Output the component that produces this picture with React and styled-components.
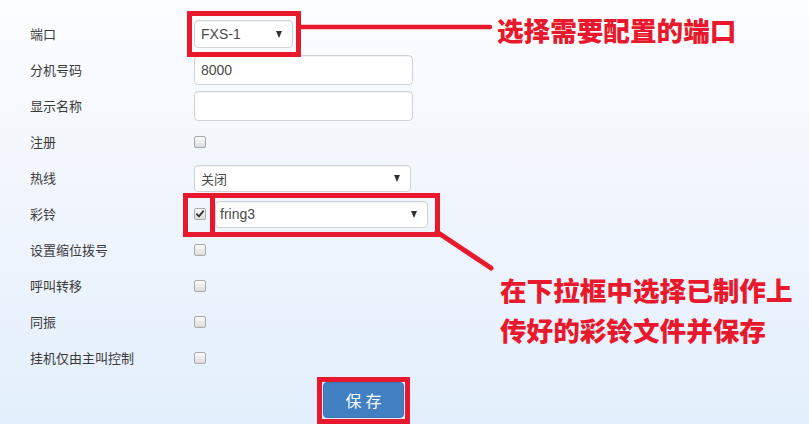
import React from "react";
import styled, { createGlobalStyle } from "styled-components";

const Global = createGlobalStyle`
  html, body { margin: 0; padding: 0; height: 100%; }
  body {
    background: linear-gradient(180deg, #fcfdff 0%, #f1f6fd 45%, #e3effc 100%);
    font-family: "Noto Sans CJK SC", "Noto Sans", sans-serif;
    overflow: hidden;
  }
  #root { min-height: 424px; }
`;

const Page = styled.div`
  position: relative;
  width: 809px;
  height: 424px;
  padding: 16px 0 0 30px;
  box-sizing: border-box;
`;

const Form = styled.div`
  display: flex;
  flex-direction: column;
`;

const Row = styled.div`
  display: grid;
  grid-template-columns: 164px 1fr;
  align-items: center;
  height: 36px;
`;

const Label = styled.div`
  font-size: 13px;
  color: #3a3a3a;
  line-height: 16px;
`;

const Controls = styled.div`
  display: flex;
  align-items: center;
  gap: ${(p) => p.$gap || 0}px;
`;

const Field = styled.div`
  position: relative;
  box-sizing: border-box;
  width: ${(p) => p.$w}px;
  height: ${(p) => p.$h}px;
  background: #fff;
  border: 1px solid #cfd3d8;
  border-radius: 4px;
  box-shadow: inset 0 1px 1px rgba(0, 0, 0, 0.06);
  display: flex;
  align-items: center;
  padding-left: ${(p) => p.$pl || 6}px;
  font-family: "Liberation Sans", "Noto Sans CJK SC", sans-serif;
  font-size: 14px;
  color: #555;
  ${(p) =>
    p.$select &&
    `
    &::after {
      content: "";
      position: absolute;
      right: 10px;
      top: 50%;
      margin-top: -3px;
      border-left: 3.5px solid transparent;
      border-right: 3.5px solid transparent;
      border-top: 7px solid #333;
    }
  `}
`;

const FieldText = styled.span`
  font-family: ${(p) => (p.$cjk ? '"Noto Sans CJK SC", sans-serif' : '"Liberation Sans", "Noto Sans CJK SC", sans-serif')};
  font-size: ${(p) => (p.$cjk ? 13 : 14)}px;
  color: #4a4a4a;
`;

const Check = styled.span`
  box-sizing: border-box;
  width: 12px;
  height: 12px;
  border: 1px solid #a9acb0;
  border-radius: 2px;
  background: linear-gradient(180deg, #fafafa 0%, #dcdcdc 100%);
  display: flex;
  align-items: center;
  justify-content: center;
`;

const ButtonRow = styled.div`
  display: flex;
  padding-left: 293px;
  margin-top: 6px;
`;

const SaveButton = styled.button`
  width: 81px;
  height: 36px;
  border: 1px solid #3a74b4;
  border-radius: 4px;
  background: #4380c3;
  color: #fff;
  font-family: "Noto Sans CJK SC", sans-serif;
  font-size: 16px;
  letter-spacing: 4px;
  padding: 0 0 0 4px;
`;

const RedBox = styled.div`
  position: absolute;
  left: ${(p) => p.$x}px;
  top: ${(p) => p.$y}px;
  width: ${(p) => p.$w}px;
  height: ${(p) => p.$h}px;
  box-sizing: border-box;
  border: 5px solid #e8192c;
`;

const Lines = styled.svg`
  position: absolute;
  left: 0;
  top: 0;
  pointer-events: none;
`;

const Note = styled.div`
  position: absolute;
  left: ${(p) => p.$x}px;
  top: ${(p) => p.$y}px;
  font-family: "Noto Sans CJK SC", sans-serif;
  font-weight: 900;
  font-size: 26.6px;
  line-height: 40px;
  color: #e8192c;
  white-space: nowrap;
`;

const CheckMark = () => (
  <svg width="10" height="10" viewBox="0 0 10 10">
    <path d="M1.8 5.2 L4 7.3 L8.3 2.2" fill="none" stroke="#333" strokeWidth="1.8" strokeLinecap="round" strokeLinejoin="round" />
  </svg>
);

const Checkbox = ({ checked }) => <Check>{checked && <CheckMark />}</Check>;

export default function App() {
  return (
    <>
      <Global />
      <Page>
        <Form>
          <Row>
            <Label>端口</Label>
            <Controls>
              <Field $w={99} $h={28} $select>
                <FieldText>FXS-1</FieldText>
              </Field>
            </Controls>
          </Row>
          <Row>
            <Label>分机号码</Label>
            <Controls>
              <Field $w={219} $h={30}>
                <FieldText>8000</FieldText>
              </Field>
            </Controls>
          </Row>
          <Row>
            <Label>显示名称</Label>
            <Controls>
              <Field $w={219} $h={30} />
            </Controls>
          </Row>
          <Row>
            <Label>注册</Label>
            <Controls>
              <Checkbox />
            </Controls>
          </Row>
          <Row>
            <Label>热线</Label>
            <Controls>
              <Field $w={217} $h={27} $select>
                <FieldText $cjk>关闭</FieldText>
              </Field>
            </Controls>
          </Row>
          <Row>
            <Label>彩铃</Label>
            <Controls $gap={9}>
              <Checkbox checked />
              <Field $w={213} $h={27} $select $pl={4}>
                <FieldText>fring3</FieldText>
              </Field>
            </Controls>
          </Row>
          <Row>
            <Label>设置缩位拨号</Label>
            <Controls>
              <Checkbox />
            </Controls>
          </Row>
          <Row>
            <Label>呼叫转移</Label>
            <Controls>
              <Checkbox />
            </Controls>
          </Row>
          <Row>
            <Label>同振</Label>
            <Controls>
              <Checkbox />
            </Controls>
          </Row>
          <Row>
            <Label>挂机仅由主叫控制</Label>
            <Controls>
              <Checkbox />
            </Controls>
          </Row>
          <ButtonRow>
            <SaveButton>保存</SaveButton>
          </ButtonRow>
        </Form>

        <RedBox $x={187} $y={11} $w={114} $h={46} />
        <RedBox $x={183} $y={193} $w={32} $h={44} />
        <RedBox $x={210} $y={193} $w={230} $h={44} />
        <RedBox $x={317} $y={377} $w={93} $h={47} />

        <Lines width="809" height="424" viewBox="0 0 809 424">
          <line x1="300" y1="27" x2="490" y2="27" stroke="#e8192c" strokeWidth="4.5" strokeLinecap="round" />
          <line x1="437" y1="232" x2="491" y2="268" stroke="#e8192c" strokeWidth="5" strokeLinecap="round" />
        </Lines>

        <Note $x={497} $y={10}>选择需要配置的端口</Note>
        <Note $x={500} $y={270}>
          在下拉框中选择已制作上
          <br />
          传好的彩铃文件并保存
        </Note>
      </Page>
    </>
  );
}
